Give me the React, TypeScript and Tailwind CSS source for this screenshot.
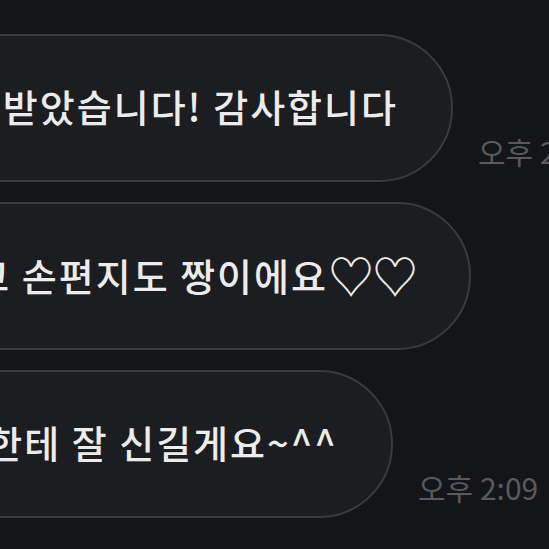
import React from "react";

const font = { fontFamily: '"Noto Sans CJK KR", "Noto Sans", sans-serif' };

function Row({
  children,
  width,
  time,
}: {
  children: React.ReactNode;
  width: string;
  time?: string;
}) {
  return (
    <div className="flex items-end shrink-0">
      <div
        className={`-ml-[100px] ${width} h-[148px] shrink-0 rounded-full border-2 border-[#3a3b3e] bg-[#1c1d20] flex items-center justify-end pr-[53px] overflow-hidden`}
      >
        <span className="whitespace-nowrap text-[38px] font-medium tracking-[2px] leading-none text-[#ececec] pb-[4px]">
          {children}
        </span>
      </div>
      {time && (
        <span className="ml-[25px] mb-[16px] shrink-0 whitespace-nowrap text-[30px] leading-none text-[#58595c]">
          {time}
        </span>
      )}
    </div>
  );
}

export default function App() {
  return (
    <div
      style={font}
      className="w-[549px] h-[549px] overflow-hidden bg-[#141518] pt-[34px] flex flex-col gap-[20px]"
    >
      <Row width="w-[553px]" time="오후 2:09">
        잘 받았습니다! 감사합니다
      </Row>
      <Row width="w-[571px]">
        선물도 예쁘고 손편지도 짱이에요
        <span className="text-[46px] tracking-[-2px] align-[-3px]">♡♡</span>
      </Row>
      <Row width="w-[493px]" time="오후 2:09">
        아기한테 잘 신길게요~^^
      </Row>
    </div>
  );
}
